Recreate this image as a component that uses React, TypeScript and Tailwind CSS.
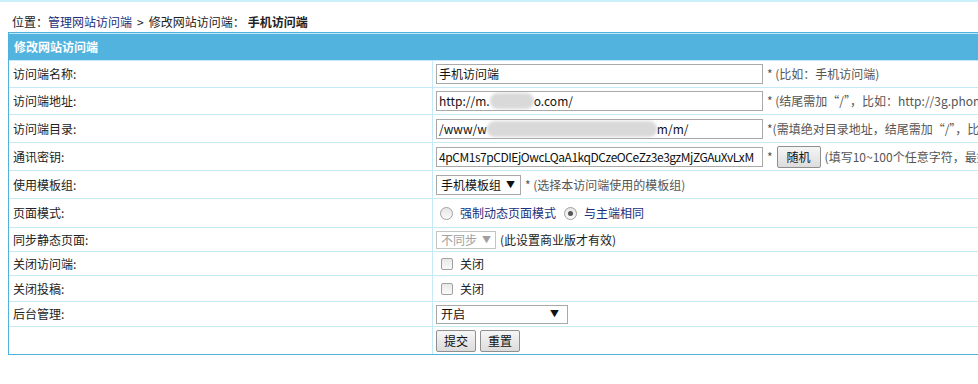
import React from "react";

const Row = ({
  label,
  h,
  children,
}: {
  label: string;
  h: string;
  children?: React.ReactNode;
}) => (
  <div className={`flex border-t border-[#c6e9f8] ${h}`}>
    <div className="w-[424px] shrink-0 border-r border-[#c6e9f8] pl-[4px] flex items-center text-[#222]">
      {label}
    </div>
    <div className="flex-1 pl-[3px] flex items-center gap-[4px] whitespace-nowrap">
      {children}
    </div>
  </div>
);

const TextBox = ({ children, tight }: { children: React.ReactNode; tight?: boolean }) => (
  <div
    className={`w-[327px] h-[20px] border border-[#a9a9a9] bg-white pl-[2px] flex items-center overflow-hidden whitespace-nowrap text-[#111] text-[12px] ${
      tight ? "tracking-[-0.45px]" : ""
    }`}
  >
    {children}
  </div>
);

const Blur = ({ w }: { w: string }) => (
  <span className={`inline-block h-[16px] ${w} rounded-full bg-[#d9d9d9] blur-[1.5px]`} />
);

const Hint = ({ children }: { children: React.ReactNode }) => (
  <span className="text-[#555]">{children}</span>
);

const Radio = ({ checked }: { checked?: boolean }) => (
  <span className="inline-flex w-[13px] h-[13px] rounded-full border border-[#a0a0a0] bg-gradient-to-b from-[#e6e6e6] to-[#fafafa] items-center justify-center">
    {checked && <span className="w-[5px] h-[5px] rounded-full bg-[#555]" />}
  </span>
);

const Check = () => (
  <span className="inline-block w-[12px] h-[12px] rounded-[2px] border border-[#a0a0a0] bg-gradient-to-b from-[#e8e8e8] to-[#fafafa]" />
);

const Btn = ({ children, w }: { children: React.ReactNode; w: string }) => (
  <span
    className={`inline-flex items-center justify-center h-[22px] ${w} border border-[#8f8f8f] rounded-[2px] bg-gradient-to-b from-[#f6f6f6] to-[#dcdcdc] text-[#111]`}
  >
    {children}
  </span>
);

export default function App() {
  return (
    <div className="w-[978px] h-[384px] overflow-hidden bg-white border-t-2 border-[#cdeefb] font-['Noto_Sans_CJK_SC',sans-serif] text-[12px] leading-[18px] text-[#222]">
      {/* Breadcrumb */}
      <div className="h-[30px] pt-[11px] pl-[12px] whitespace-nowrap">
        位置：<span className="text-[#1b2f7a]">管理网站访问端</span>
        <span className="mx-[5px]">&gt;</span>修改网站访问端：
        <span className="font-bold ml-[3px]">手机访问端</span>
      </div>

      {/* Form table */}
      <div className="ml-[8px] w-[1100px] border border-[#4fb2dd]">
        <div className="h-[27px] bg-[#52b4de] border-t border-[#bfe6f7] pl-[5px] flex items-center text-white font-bold">
          修改网站访问端
        </div>

        <Row label="访问端名称:" h="h-[27px]">
          <TextBox>手机访问端</TextBox>
          <Hint>* (比如：手机访问端)</Hint>
        </Row>
        <Row label="访问端地址:" h="h-[27px]">
          <TextBox>
            http://m.
            <Blur w="w-[44px]" />
            o.com/
          </TextBox>
          <Hint>* (结尾需加“/”，比如：http://3g.phome.net/)</Hint>
        </Row>
        <Row label="访问端目录:" h="h-[28px]">
          <TextBox>
            /www/w
            <Blur w="w-[170px]" />
            m/m/
          </TextBox>
          <Hint>*(需填绝对目录地址，结尾需加“/”，比如：/www/3g/)</Hint>
        </Row>
        <Row label="通讯密钥:" h="h-[28px]">
          <TextBox tight>4pCM1s7pCDIEjOwcLQaA1kqDCzeOCeZz3e3gzMjZGAuXvLxM</TextBox>
          <Hint>*</Hint>
          <Btn w="w-[44px]">随机</Btn>
          <Hint>(填写10~100个任意字符，最好多种字符组合)</Hint>
        </Row>
        <Row label="使用模板组:" h="h-[28px]">
          <span className="inline-flex items-center justify-between w-[85px] h-[20px] border border-[#a9a9a9] pl-[4px] pr-[5px] text-[#111]">
            手机模板组<span className="text-[9px]">▼</span>
          </span>
          <Hint>* (选择本访问端使用的模板组)</Hint>
        </Row>
        <Row label="页面模式:" h="h-[29px]">
          <span className="inline-flex items-center ml-[4px] gap-[7px]">
            <Radio />
            <span className="text-[#1b2f7a]">强制动态页面模式</span>
          </span>
          <span className="inline-flex items-center ml-[4px] gap-[7px]">
            <Radio checked />
            <span className="text-[#1b2f7a]">与主端相同</span>
          </span>
        </Row>
        <Row label="同步静态页面:" h="h-[24px]">
          <span className="inline-flex items-center justify-between w-[60px] h-[18px] border border-[#c4c4c4] pl-[4px] pr-[4px] text-[#a0a0a0]">
            不同步<span className="text-[9px]">▼</span>
          </span>
          <span>(此设置商业版才有效)</span>
        </Row>
        <Row label="关闭访问端:" h="h-[24px]">
          <span className="inline-flex items-center ml-[5px] gap-[7px]">
            <Check />
            <span>关闭</span>
          </span>
        </Row>
        <Row label="关闭投稿:" h="h-[26px]">
          <span className="inline-flex items-center ml-[5px] gap-[7px]">
            <Check />
            <span>关闭</span>
          </span>
        </Row>
        <Row label="后台管理:" h="h-[25px]">
          <span className="inline-flex items-center justify-between w-[132px] h-[19px] border border-[#a9a9a9] pl-[4px] pr-[8px] text-[#111]">
            开启<span className="text-[9px]">▼</span>
          </span>
        </Row>
        <Row label="" h="h-[28px]">
          <Btn w="w-[40px]">提交</Btn>
          <Btn w="w-[40px]">重置</Btn>
        </Row>
      </div>
    </div>
  );
}
